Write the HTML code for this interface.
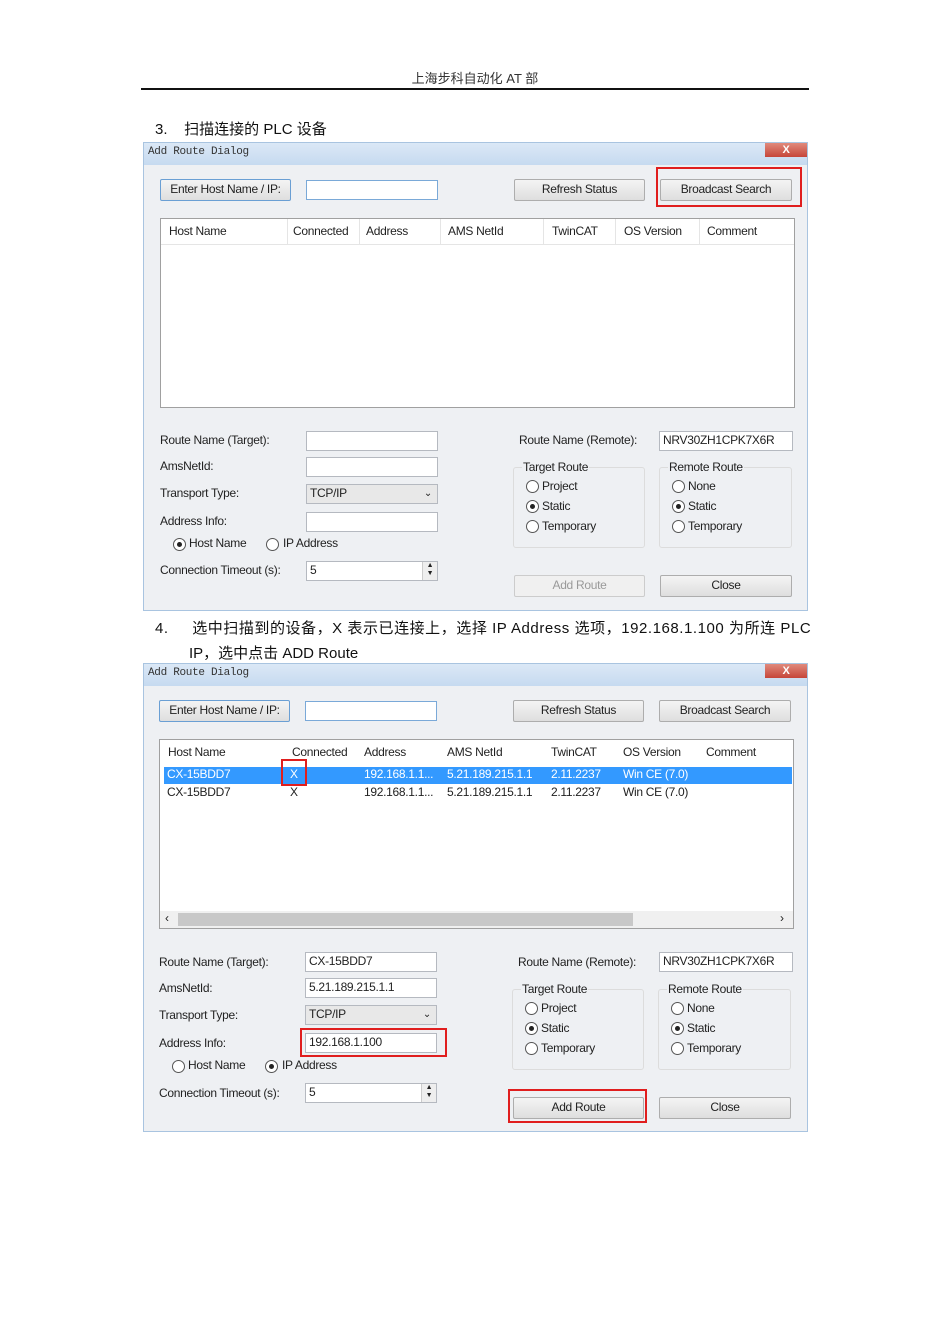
<!DOCTYPE html>
<html><head><meta charset="utf-8"><style>
*{margin:0;padding:0;box-sizing:border-box}
body{width:950px;height:1344px;background:#fff;position:relative;font-family:"Liberation Sans","Noto Sans CJK SC",sans-serif;overflow:hidden}
.a{position:absolute}
.t{position:absolute;font-size:15px;color:#111;white-space:nowrap}
.dlg{position:absolute;left:143px;width:665px;height:469px;background:#eef0f3;border:1px solid #a9c4e0;font-size:12px;color:#222;letter-spacing:-0.3px}
.dlg .tb{position:absolute;left:0;top:0;width:100%;height:22px;background:linear-gradient(#dbe8f6,#c6daf0);font-family:"Liberation Mono",monospace;font-size:11px;color:#333;padding:3px 4px}
.dlg .x{position:absolute;left:621px;top:0;width:42px;height:14px;background:linear-gradient(#e08a7c,#c6463a);color:#fff;font-size:11px;text-align:center;line-height:14px;font-weight:bold}
.btn{position:absolute;height:22px;border:1px solid #adadad;background:linear-gradient(#f4f4f4,#dedede);text-align:center;line-height:19px;border-radius:2px}
.inp{position:absolute;height:20px;border:1px solid #b5b9c0;background:#fff;padding:1px 3px;line-height:15px}
.lbl{position:absolute;white-space:nowrap;margin-top:-1px}
.list{position:absolute;left:16px;top:75px;width:635px;height:190px;border:1px solid #a0a0a0;background:#fff}
.hd{position:absolute;top:0;left:0;width:100%;height:26px;border-bottom:1px solid #e5e5e5}
.hd span{position:absolute;top:5px}
.sep{position:absolute;top:0;width:1px;height:26px;background:#e5e5e5}
.grp{position:absolute;width:132px;height:81px;border:1px solid #dcdcdc;border-radius:3px}
.grp .gt{position:absolute;top:-8px;left:8px;background:#eef0f3;padding:0 1px}
.rd{position:absolute;width:13px;height:13px;border:1px solid #555;border-radius:50%;background:#fff}
.rd.on::after{content:"";position:absolute;left:3px;top:3px;width:5px;height:5px;border-radius:50%;background:#222}
.red{position:absolute;border:2px solid #e01e1e}
</style></head><body>
<div class="t" style="left:0;width:950px;text-align:center;top:71px;font-size:13px;line-height:15px;color:#333">上海步科自动化 AT 部</div>
<div class="a" style="left:141px;top:88px;width:668px;height:2px;background:#111"></div>
<div class="t" style="left:155px;top:118px">3.&nbsp;&nbsp;&nbsp;&nbsp;扫描连接的 PLC 设备</div>

<!-- dialog 1 -->
<div class="dlg" style="top:142px">
<div class="tb">Add Route Dialog</div><div class="x">X</div>
<div class="btn" style="left:16px;top:36px;width:131px;border-color:#6a9fd4">Enter Host Name / IP:</div>
<div class="inp" style="left:162px;top:37px;width:132px;border-color:#7aa9d8"></div>
<div class="btn" style="left:370px;top:36px;width:131px">Refresh Status</div>
<div class="btn" style="left:516px;top:36px;width:132px">Broadcast Search</div>
<div class="list"><div class="hd">
<span style="left:8px">Host Name</span><span style="left:132px">Connected</span><span style="left:205px">Address</span><span style="left:287px">AMS NetId</span><span style="left:391px">TwinCAT</span><span style="left:463px">OS Version</span><span style="left:546px">Comment</span>
<div class="sep" style="left:126px"></div><div class="sep" style="left:198px"></div><div class="sep" style="left:279px"></div><div class="sep" style="left:382px"></div><div class="sep" style="left:454px"></div><div class="sep" style="left:538px"></div>
</div></div>
<div class="lbl" style="left:16px;top:291px">Route Name (Target):</div><div class="inp" style="left:162px;top:288px;width:132px"></div>
<div class="lbl" style="left:16px;top:317px">AmsNetId:</div><div class="inp" style="left:162px;top:314px;width:132px"></div>
<div class="lbl" style="left:16px;top:344px">Transport Type:</div><div class="inp" style="left:162px;top:341px;width:132px;background:#e8e8e8">TCP/IP<span style="position:absolute;right:5px;top:1px;font-size:10px">&#8964;</span></div>
<div class="lbl" style="left:16px;top:372px">Address Info:</div><div class="inp" style="left:162px;top:369px;width:132px"></div>
<div class="rd on" style="left:29px;top:395px"></div><div class="lbl" style="left:45px;top:394px">Host Name</div>
<div class="rd" style="left:122px;top:395px"></div><div class="lbl" style="left:139px;top:394px">IP Address</div>
<div class="lbl" style="left:16px;top:421px">Connection Timeout (s):</div><div class="inp" style="left:162px;top:418px;width:132px">5<span style="position:absolute;right:0;top:0;width:15px;height:18px;border-left:1px solid #ccc;background:#eee;font-size:7px;line-height:8px;text-align:center">▲<br>▼</span></div>
<div class="lbl" style="left:375px;top:291px">Route Name (Remote):</div><div class="inp" style="left:515px;top:288px;width:134px">NRV30ZH1CPK7X6R</div>
<div class="grp" style="left:369px;top:324px"><span class="gt">Target Route</span></div>
<div class="grp" style="left:515px;top:324px;width:133px"><span class="gt">Remote Route</span></div>
<div class="rd" style="left:382px;top:337px"></div><div class="lbl" style="left:398px;top:337px">Project</div>
<div class="rd on" style="left:382px;top:357px"></div><div class="lbl" style="left:398px;top:357px">Static</div>
<div class="rd" style="left:382px;top:377px"></div><div class="lbl" style="left:398px;top:377px">Temporary</div>
<div class="rd" style="left:528px;top:337px"></div><div class="lbl" style="left:544px;top:337px">None</div>
<div class="rd on" style="left:528px;top:357px"></div><div class="lbl" style="left:544px;top:357px">Static</div>
<div class="rd" style="left:528px;top:377px"></div><div class="lbl" style="left:544px;top:377px">Temporary</div>
<div class="btn" style="left:370px;top:432px;width:131px;color:#999;background:#f0f0f0;border-color:#ccc">Add Route</div>
<div class="btn" style="left:516px;top:432px;width:132px">Close</div>
</div>
<div class="red" style="left:656px;top:167px;width:146px;height:40px"></div>

<div class="t" style="left:155px;top:617px;letter-spacing:0.55px">4.&nbsp;&nbsp;&nbsp;&nbsp;&nbsp;选中扫描到的设备，X 表示已连接上，选择 IP Address 选项，192.168.1.100 为所连 PLC</div>
<div class="t" style="left:189px;top:642px">IP，选中点击 ADD Route</div>

<!-- dialog 2 -->
<div class="dlg" style="top:663px;left:143px">
<div class="tb">Add Route Dialog</div><div class="x">X</div>
<div class="btn" style="left:15px;top:36px;width:131px;border-color:#6a9fd4">Enter Host Name / IP:</div>
<div class="inp" style="left:161px;top:37px;width:132px;border-color:#7aa9d8"></div>
<div class="btn" style="left:369px;top:36px;width:131px">Refresh Status</div>
<div class="btn" style="left:515px;top:36px;width:132px">Broadcast Search</div>
<div class="list" style="left:15px"><div class="hd" style="border:none">
<span style="left:8px">Host Name</span><span style="left:132px">Connected</span><span style="left:204px">Address</span><span style="left:287px">AMS NetId</span><span style="left:391px">TwinCAT</span><span style="left:463px">OS Version</span><span style="left:546px">Comment</span>
</div>
<div class="a" style="left:4px;top:27px;width:628px;height:17px;background:#3399ff"></div>
<div class="a" style="top:27px;left:7px;color:#fff">CX-15BDD7</div><div class="a" style="top:27px;left:130px;color:#fff">X</div><div class="a" style="top:27px;left:204px;color:#fff">192.168.1.1...</div><div class="a" style="top:27px;left:287px;color:#fff">5.21.189.215.1.1</div><div class="a" style="top:27px;left:391px;color:#fff">2.11.2237</div><div class="a" style="top:27px;left:463px;color:#fff">Win CE (7.0)</div>
<div class="a" style="top:45px;left:7px">CX-15BDD7</div><div class="a" style="top:45px;left:130px">X</div><div class="a" style="top:45px;left:204px">192.168.1.1...</div><div class="a" style="top:45px;left:287px">5.21.189.215.1.1</div><div class="a" style="top:45px;left:391px">2.11.2237</div><div class="a" style="top:45px;left:463px">Win CE (7.0)</div>
<div class="a" style="left:0;top:171px;width:633px;height:17px;background:#f0f0f0"></div>
<div class="a" style="left:18px;top:173px;width:455px;height:13px;background:#c8c8c8"></div>
<div class="a" style="left:5px;top:171px;font-size:12px">‹</div><div class="a" style="left:620px;top:171px;font-size:12px">›</div>
</div>
<div class="lbl" style="left:15px;top:292px">Route Name (Target):</div><div class="inp" style="left:161px;top:288px;width:132px">CX-15BDD7</div>
<div class="lbl" style="left:15px;top:318px">AmsNetId:</div><div class="inp" style="left:161px;top:314px;width:132px">5.21.189.215.1.1</div>
<div class="lbl" style="left:15px;top:345px">Transport Type:</div><div class="inp" style="left:161px;top:341px;width:132px;background:#e8e8e8">TCP/IP<span style="position:absolute;right:5px;top:1px;font-size:10px">&#8964;</span></div>
<div class="lbl" style="left:15px;top:373px">Address Info:</div><div class="inp" style="left:161px;top:369px;width:132px">192.168.1.100</div>
<div class="rd" style="left:28px;top:396px"></div><div class="lbl" style="left:44px;top:395px">Host Name</div>
<div class="rd on" style="left:121px;top:396px"></div><div class="lbl" style="left:138px;top:395px">IP Address</div>
<div class="lbl" style="left:15px;top:423px">Connection Timeout (s):</div><div class="inp" style="left:161px;top:419px;width:132px">5<span style="position:absolute;right:0;top:0;width:15px;height:18px;border-left:1px solid #ccc;background:#eee;font-size:7px;line-height:8px;text-align:center">▲<br>▼</span></div>
<div class="lbl" style="left:374px;top:292px">Route Name (Remote):</div><div class="inp" style="left:515px;top:288px;width:134px">NRV30ZH1CPK7X6R</div>
<div class="grp" style="left:368px;top:325px"><span class="gt">Target Route</span></div>
<div class="grp" style="left:514px;top:325px;width:133px"><span class="gt">Remote Route</span></div>
<div class="rd" style="left:381px;top:338px"></div><div class="lbl" style="left:397px;top:338px">Project</div>
<div class="rd on" style="left:381px;top:358px"></div><div class="lbl" style="left:397px;top:358px">Static</div>
<div class="rd" style="left:381px;top:378px"></div><div class="lbl" style="left:397px;top:378px">Temporary</div>
<div class="rd" style="left:527px;top:338px"></div><div class="lbl" style="left:543px;top:338px">None</div>
<div class="rd on" style="left:527px;top:358px"></div><div class="lbl" style="left:543px;top:358px">Static</div>
<div class="rd" style="left:527px;top:378px"></div><div class="lbl" style="left:543px;top:378px">Temporary</div>
<div class="btn" style="left:369px;top:433px;width:131px">Add Route</div>
<div class="btn" style="left:515px;top:433px;width:132px">Close</div>
</div>
<div class="red" style="left:281px;top:759px;width:26px;height:27px"></div>
<div class="red" style="left:300px;top:1028px;width:147px;height:29px"></div>
<div class="red" style="left:508px;top:1089px;width:139px;height:34px"></div>
</body></html>
